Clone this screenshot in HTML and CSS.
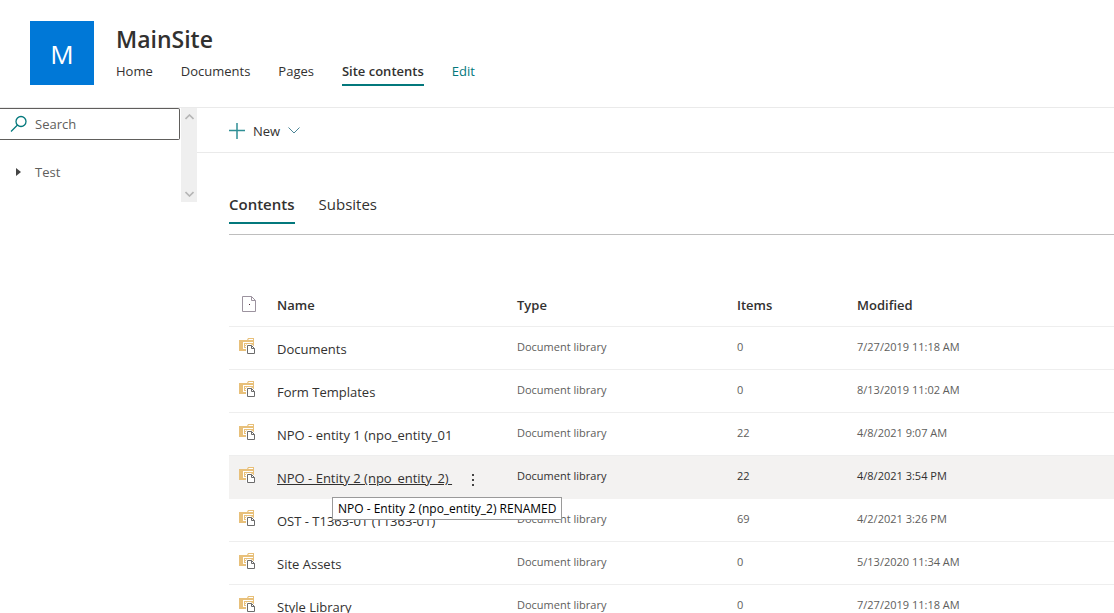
FILE: index.html
```html
<!DOCTYPE html>
<html lang="en">
<head>
    <meta charset="UTF-8">
    <meta name="viewport" content="width=device-width, initial-scale=1.0">
    <title>MainSite - Site contents</title>
    <link rel="stylesheet" href="styles.css">
</head>
<body>

    <svg class="symbols" aria-hidden="true">
        <symbol id="icon-library" viewBox="0 0 16 16">
            <path fill="#e8c07a" d="M0 2h8l1-2h6v8H8v5H0z"/>
            <path fill="#fff" d="M9 2l1-1h4v1zM4 4h10v1H5v5h3v1H4z"/>
            <path fill="#fff" d="M6 6h1v1H6zM8 6h4v1H8zM6 8h1v1H6z"/>
            <path fill="#fff" d="M7 6.500h6l3 3V16H7z"/>
            <path fill="#fff" stroke="#6b6b6b" d="M8.500 7.500h4l3 3v5h-7z"/>
            <path fill="none" stroke="#6b6b6b" d="M12.500 7.500v3h3"/>
        </symbol>
    </svg>

    <header class="site-header">
        <div class="logo">M</div>
        <div>
            <h1>MainSite</h1>
            <nav class="site-nav">
                <a href="#">Home</a>
                <a href="#">Documents</a>
                <a href="#">Pages</a>
                <a href="#" class="active">Site contents</a>
                <a href="#" class="edit">Edit</a>
            </nav>
        </div>
    </header>

    <div class="page">
        <aside class="sidebar">
            <div class="sidebar-content">
                <div class="search">
                    <svg width="18" height="18" viewBox="0 0 18 18" fill="none" stroke="#03787c" stroke-width="1.300">
                        <circle cx="11" cy="6.500" r="5"/>
                        <path d="M7.500 10L1 16.500"/>
                    </svg>
                    <input type="text" aria-label="Search" placeholder="Search">
                </div>
                <button class="tree-item">
                    <svg width="5" height="8" viewBox="0 0 5 8"><path fill="#444" d="M0 0l5 4-5 4z"/></svg>
                    Test
                </button>
            </div>
            <div class="scrollbar">
                <svg width="9" height="6" viewBox="0 0 9 6" fill="none" stroke="#b5b5b5" stroke-width="1.600"><path d="M.5 5l4-4 4 4"/></svg>
                <svg width="9" height="6" viewBox="0 0 9 6" fill="none" stroke="#b5b5b5" stroke-width="1.600"><path d="M.5 1l4 4 4-4"/></svg>
            </div>
        </aside>

        <main>
            <div class="command-bar">
                <button class="new-button">
                    <svg width="16" height="16" viewBox="0 0 16 16" stroke="#2f8f95" stroke-width="1.500"><path d="M0 7.500h16M8 0v16"/></svg>
                    New
                    <svg width="12" height="7" viewBox="0 0 12 7" fill="none" stroke="#4a8496"><path d="M.5.500L6 6 11.500.500"/></svg>
                </button>
            </div>

            <div class="content">
                <div class="tabs">
                    <button class="tab active">Contents</button>
                    <button class="tab">Subsites</button>
                </div>

                <table class="contents-table">
                    <thead>
                        <tr>
                            <th class="col-icon">
                                <svg width="14" height="16" viewBox="0 0 14 16" fill="none" stroke="#9c939f">
                                    <path d="M.5.500h9l4 4v11H.5zM9.500.500v4h4"/>
                                    <path fill="#4c2a35" stroke="none" d="M7 8h1v1H7z"/>
                                </svg>
                            </th>
                            <th class="col-name">Name</th>
                            <th class="col-type">Type</th>
                            <th class="col-items">Items</th>
                            <th>Modified</th>
                        </tr>
                    </thead>
                    <tbody>
                        <tr>
                            <td class="col-icon"><svg width="16" height="16"><use href="#icon-library"/></svg></td>
                            <td class="name"><a href="#">Documents</a></td>
                            <td>Document library</td>
                            <td>0</td>
                            <td>7/27/2019 11:18 AM</td>
                        </tr>
                        <tr>
                            <td class="col-icon"><svg width="16" height="16"><use href="#icon-library"/></svg></td>
                            <td class="name"><a href="#">Form Templates</a></td>
                            <td>Document library</td>
                            <td>0</td>
                            <td>8/13/2019 11:02 AM</td>
                        </tr>
                        <tr>
                            <td class="col-icon"><svg width="16" height="16"><use href="#icon-library"/></svg></td>
                            <td class="name"><a href="#">NPO - entity 1 (npo_entity_01</a></td>
                            <td>Document library</td>
                            <td>22</td>
                            <td>4/8/2021 9:07 AM</td>
                        </tr>
                        <tr class="hovered">
                            <td class="col-icon"><svg width="16" height="16"><use href="#icon-library"/></svg></td>
                            <td class="name">
                                <a href="#">NPO - Entity 2 (npo_entity_2)&nbsp;</a>
                                <button class="more" aria-label="Show actions">
                                    <svg width="2" height="12" viewBox="0 0 2 12"><path fill="#444" d="M0 0h2v2H0zM0 5h2v2H0zM0 10h2v2H0z"/></svg>
                                </button>
                                <span class="tooltip">NPO - Entity 2 (npo_entity_2) RENAMED</span>
                            </td>
                            <td>Document library</td>
                            <td>22</td>
                            <td>4/8/2021 3:54 PM</td>
                        </tr>
                        <tr>
                            <td class="col-icon"><svg width="16" height="16"><use href="#icon-library"/></svg></td>
                            <td class="name"><a href="#">OST - T1363-01 (T1363-01)</a></td>
                            <td>Document library</td>
                            <td>69</td>
                            <td>4/2/2021 3:26 PM</td>
                        </tr>
                        <tr>
                            <td class="col-icon"><svg width="16" height="16"><use href="#icon-library"/></svg></td>
                            <td class="name"><a href="#">Site Assets</a></td>
                            <td>Document library</td>
                            <td>0</td>
                            <td>5/13/2020 11:34 AM</td>
                        </tr>
                        <tr>
                            <td class="col-icon"><svg width="16" height="16"><use href="#icon-library"/></svg></td>
                            <td class="name"><a href="#">Style Library</a></td>
                            <td>Document library</td>
                            <td>0</td>
                            <td>7/27/2019 11:18 AM</td>
                        </tr>
                    </tbody>
                </table>
            </div>
        </main>
    </div>

</body>
</html>
```
FILE: styles.css
```css
* {
    box-sizing: border-box;
}
body {
    margin: 0;
    height: 100vh;
    overflow: hidden;
    font-family: "Segoe UI", "Open Sans", sans-serif;
    font-size: 13px;
    color: #323130;
    background-color: #fff;
}
a {
    color: inherit;
    text-decoration: none;
}
button {
    padding: 0;
    border: none;
    background: none;
    font: inherit;
    color: inherit;
    cursor: pointer;
}
svg {
    display: block;
    flex: none;
}
.symbols {
    position: absolute;
    width: 0;
    height: 0;
}

/* Header */
.site-header {
    display: flex;
    gap: 22px;
    padding: 21px 30px 0;
    border-bottom: 1px solid #eaeaea;
}
.logo {
    width: 64px;
    height: 64px;
    margin-bottom: 22px;
    background-color: #0078d7;
    color: #fff;
    font-size: 26px;
    line-height: 66px;
    text-align: center;
}
h1 {
    margin: 2px 0 8px;
    font-size: 23px;
    font-weight: 600;
    line-height: 32px;
}
.site-nav {
    display: flex;
    gap: 28px;
    line-height: 16px;
}
.site-nav a {
    padding-bottom: 5px;
}
.site-nav .active {
    border-bottom: 2px solid #03787c;
    font-weight: 600;
}
.site-nav .edit {
    color: #03787c;
}

/* Left navigation */
.page {
    display: flex;
}
.sidebar {
    display: flex;
    flex: none;
    align-items: flex-start;
    width: 197px;
}
.sidebar-content {
    flex: 1;
    margin-right: 1px;
}
.search {
    display: flex;
    align-items: center;
    gap: 7px;
    height: 32px;
    padding-left: 10px;
    border: 1px solid #605e5c;
    border-left: none;
    border-radius: 0 2px 2px 0;
}
.search input {
    width: 100%;
    min-width: 0;
    padding: 0;
    border: none;
    outline: none;
    font: inherit;
}
.search input::placeholder {
    color: #605e5c;
}
.tree-item {
    display: flex;
    align-items: center;
    gap: 14px;
    height: 32px;
    margin-top: 16px;
    padding-left: 16px;
    color: #605e5c;
}
.scrollbar {
    display: flex;
    flex-direction: column;
    align-items: center;
    justify-content: space-between;
    width: 16px;
    height: 94px;
    padding: 6px 0 5px;
    background-color: #efefef;
}

/* Main area */
main {
    flex: 1;
    min-width: 0;
}
.command-bar {
    height: 45px;
    padding-left: 32px;
    border-bottom: 1px solid #eaeaea;
}
.new-button {
    display: flex;
    align-items: center;
    gap: 8px;
    height: 45px;
}
.content {
    padding: 40px 0 0 32px;
}
.tabs {
    display: flex;
    gap: 24px;
    margin-bottom: 49px;
    padding-bottom: 10px;
    border-bottom: 1px solid #bebebe;
    font-size: 15px;
}
.tab {
    height: 31px;
    padding-bottom: 8px;
    border-bottom: 2px solid transparent;
    line-height: 20px;
}
.tab.active {
    border-bottom-color: #03787c;
    font-weight: 600;
}

/* Table */
.contents-table {
    width: 100%;
    table-layout: fixed;
    border-collapse: separate;
    border-spacing: 0;
}
th, td {
    height: 43px;
    padding: 0;
    border-bottom: 1px solid #eeeeee;
    text-align: left;
}
th {
    font-weight: 600;
}
td {
    padding-bottom: 4px;
    color: #605e5c;
    font-size: 11px;
}
.col-icon {
    width: 48px;
    padding-left: 10px;
}
th.col-icon {
    padding-left: 13px;
    padding-bottom: 2px;
}
.col-name {
    width: 240px;
}
.col-type {
    width: 220px;
}
.col-items {
    width: 120px;
}
td.name {
    position: relative;
    padding-top: 2px;
    padding-bottom: 0;
    color: #323130;
    font-size: 13px;
}
td.name a {
    display: inline-block;
    min-width: 184px;
}
.hovered td {
    background-color: #f3f2f1;
    border-bottom-color: #f3f2f1;
    color: #323130;
}
.hovered a {
    text-decoration: underline;
}
.more {
    display: inline-block;
    padding: 0 8px;
    vertical-align: middle;
}
.tooltip {
    position: absolute;
    z-index: 1;
    top: 41px;
    left: 55px;
    padding: 2px 5px;
    border: 1px solid #9a9a9a;
    background-color: #fff;
    color: #000;
    font-size: 12px;
    line-height: 17px;
    white-space: nowrap;
}
```
